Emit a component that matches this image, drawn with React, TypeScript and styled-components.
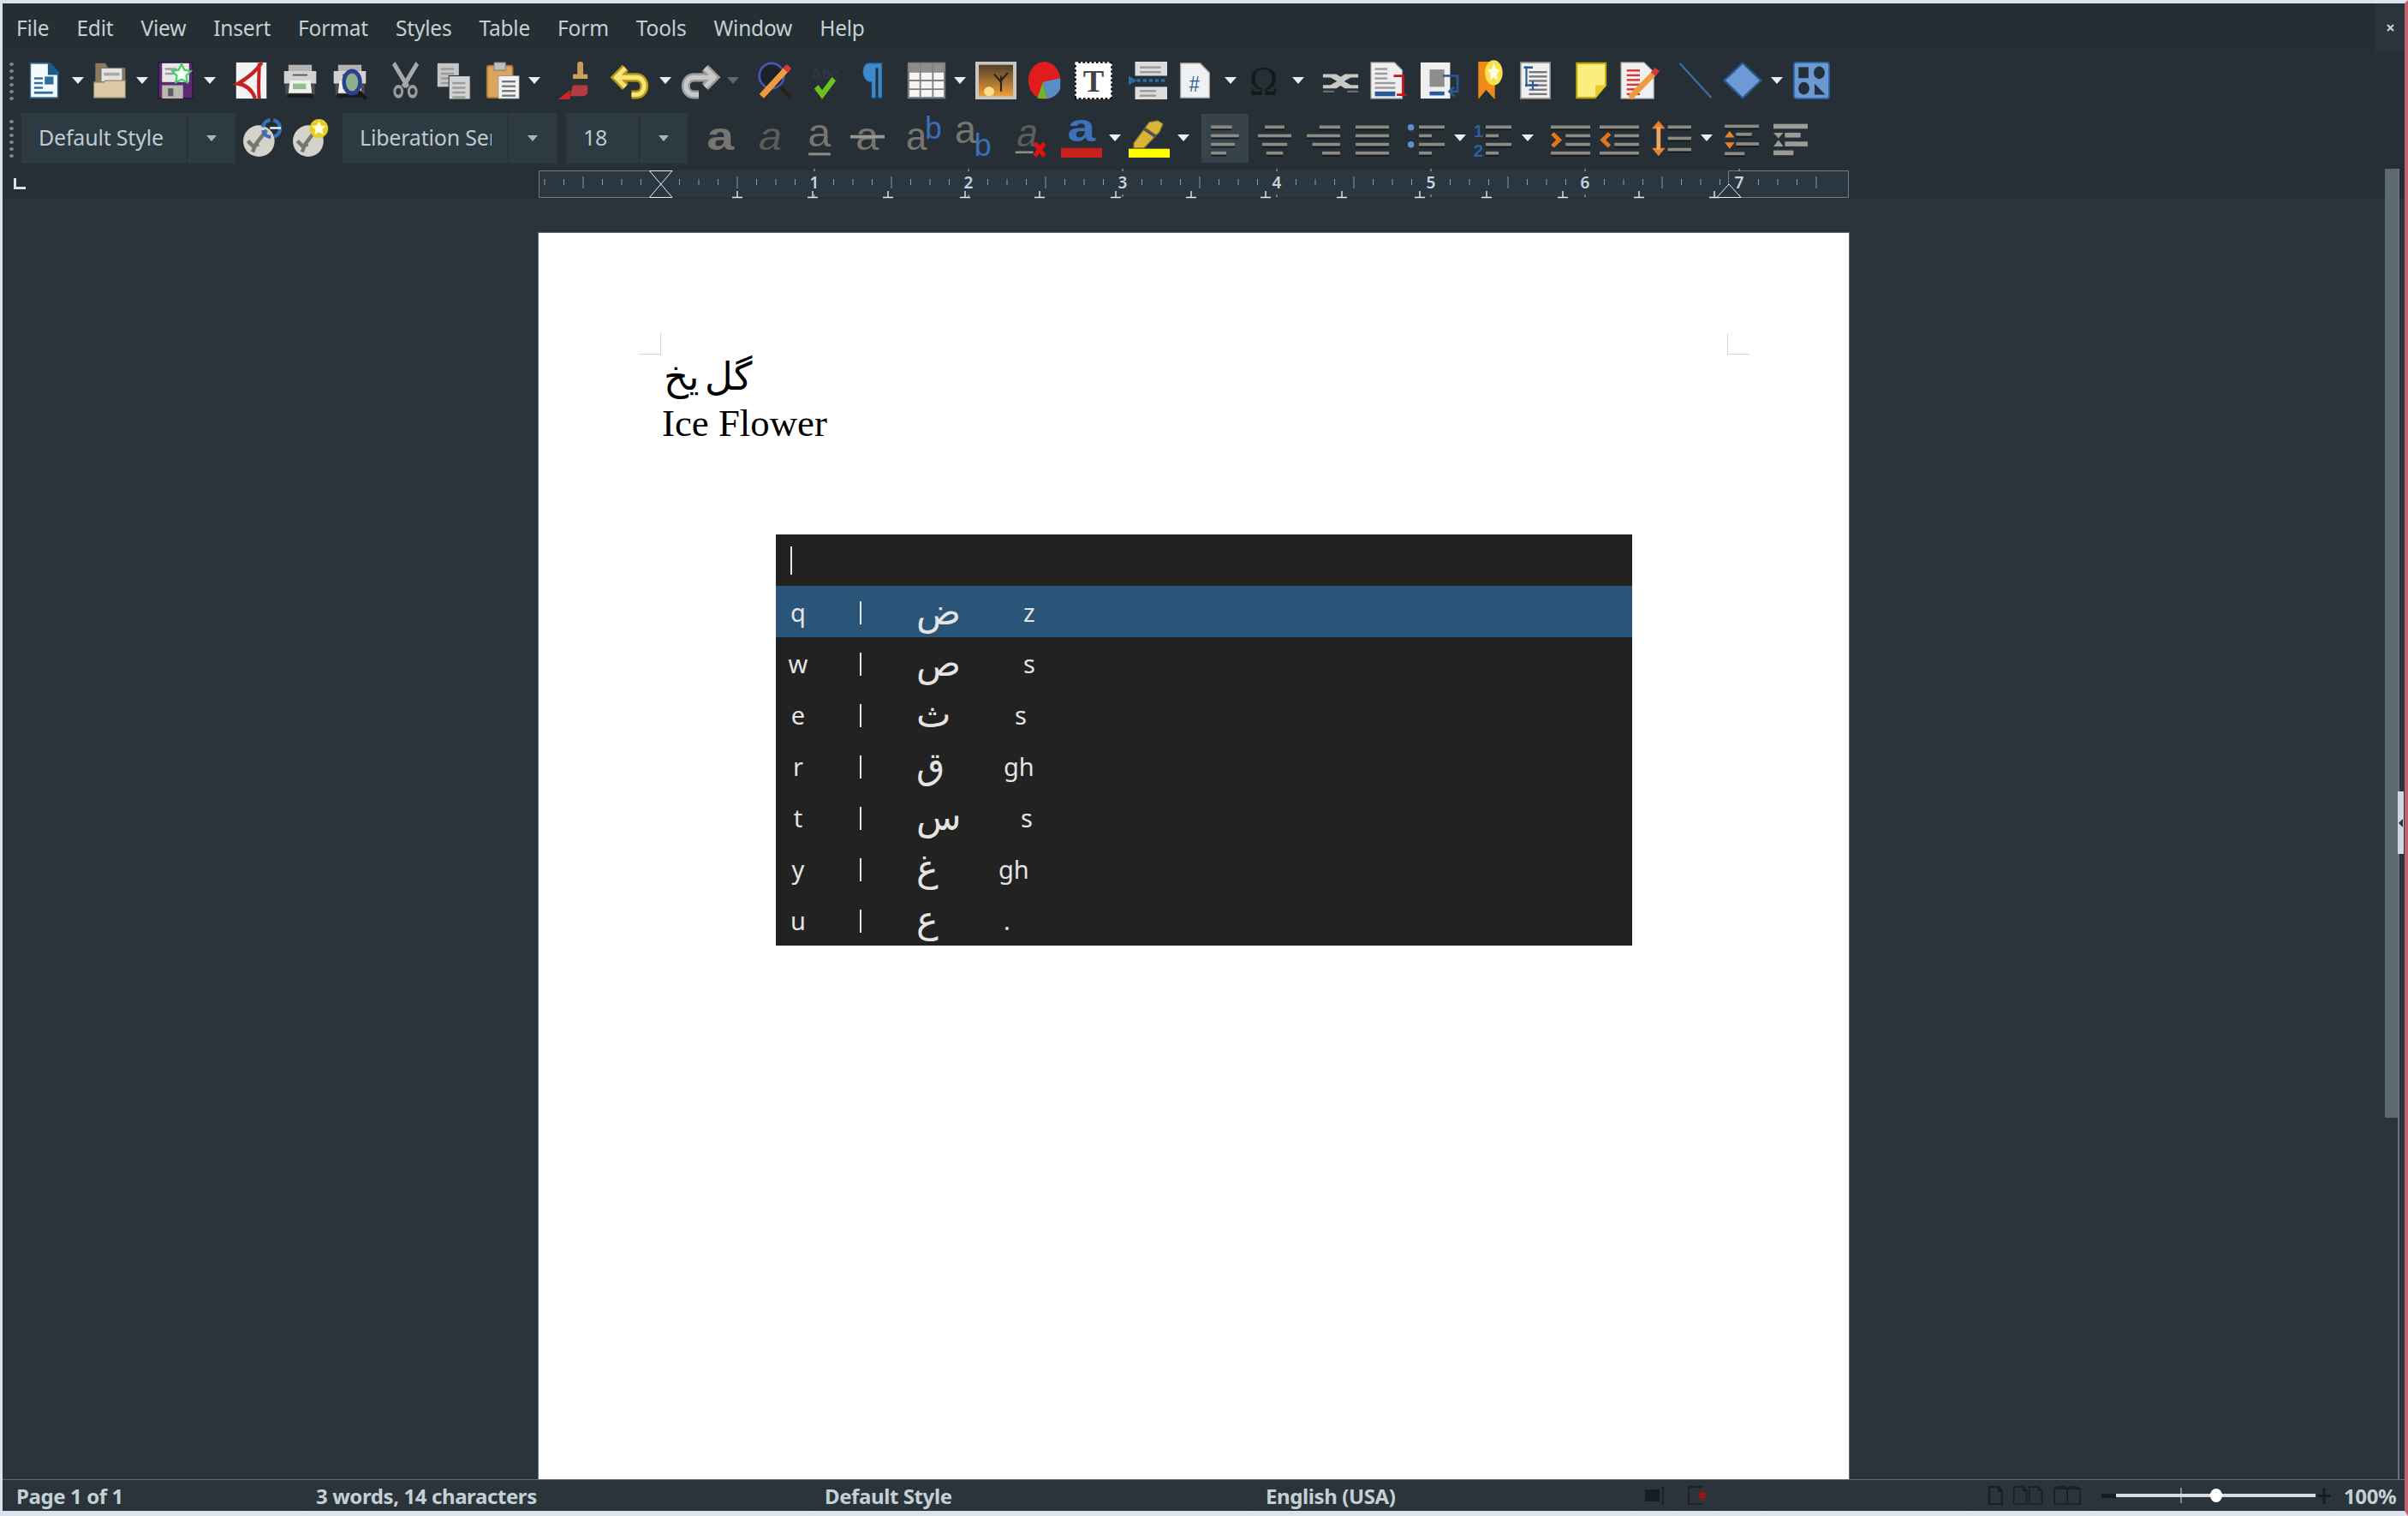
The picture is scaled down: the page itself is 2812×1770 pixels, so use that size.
import React from 'react';
import styled, { createGlobalStyle } from 'styled-components';

const GlobalStyle = createGlobalStyle`
  html, body { margin: 0; padding: 0; background: #dde3ee; }
  #root { width: 2812px; height: 1770px; overflow: hidden; }
`;

const Window = styled.div`
  box-sizing: border-box;
  width: 2812px;
  height: 1770px;
  display: flex;
  flex-direction: column;
  background: #2a343a;
  border-top: 4px solid #dde3ee;
  border-left: 3px solid #dde3ee;
  border-bottom: 6px solid #dde3ee;
  border-right: 4px solid #c4626c;
  font-family: 'Noto Sans', 'Open Sans', sans-serif;
  color: #c3d0d6;
`;

const MenuBar = styled.div`
  display: flex;
  height: 56px;
  flex: none;
`;

const MenuStrip = styled.div`
  flex: 1;
  display: flex;
  align-items: center;
  background: #242e33;
`;

const MenuItem = styled.span`
  padding: 0 16px;
  font-size: 24.5px;
  letter-spacing: -0.2px;
`;

const CloseCell = styled.div`
  width: 34px;
  display: flex;
  align-items: center;
  justify-content: center;
`;

const ToolRow = styled.div<{ $h: number }>`
  display: flex;
  align-items: center;
  height: ${p => p.$h}px;
  flex: none;
  padding-left: 8px;
  background: #262f35;
`;

const Grip = styled.div`
  width: 5px;
  height: 46px;
  flex: none;
  background: radial-gradient(circle at center, #71808a 2px, transparent 2.5px) 0 0 / 5px 8px;
`;

const Tool = styled.div<{ $w: number; $ml: number; $h?: number }>`
  width: ${p => p.$w}px;
  height: ${p => p.$h ?? 44}px;
  margin-left: ${p => p.$ml}px;
  flex: none;
  display: flex;
  align-items: center;
  justify-content: center;
  svg { display: block; overflow: visible; }
`;

const Caret = styled.div<{ $dim?: boolean }>`
  width: 0;
  height: 0;
  border-left: 7px solid transparent;
  border-right: 7px solid transparent;
  border-top: 8px solid ${p => (p.$dim ? '#5a676e' : '#e9eff1')};
`;

const Combo = styled.div`
  width: 100%;
  height: 61px;
  display: flex;
  background: #2e3a42;
  border: 1px solid #253037;
  box-sizing: border-box;
  font-size: 25px;
  color: #bccad1;
`;

const ComboText = styled.div<{ $pl: number }>`
  flex: 1;
  min-width: 0;
  margin-left: ${p => p.$pl}px;
  margin-right: 19px;
  line-height: 56px;
  white-space: nowrap;
  overflow: hidden;
  letter-spacing: -0.2px;
`;

const ComboButton = styled.div`
  width: 56px;
  flex: none;
  border-left: 1px solid #232d33;
  display: flex;
  align-items: center;
  justify-content: center;
`;

const SmallCaret = styled.div`
  width: 0;
  height: 0;
  border-left: 6px solid transparent;
  border-right: 6px solid transparent;
  border-top: 7px solid #aab6bc;
`;

const ActiveBox = styled.div`
  width: 55px;
  height: 57px;
  background: #36434b;
  display: flex;
  align-items: center;
  justify-content: center;
`;

const Body = styled.div`
  position: relative;
  flex: 1;
  min-height: 0;
  display: flex;
  flex-direction: column;
`;

const RulerRow = styled.div`
  height: 38px;
  flex: none;
  display: flex;
  align-items: flex-end;
  background: #262f35;
`;

const TabCorner = styled.div`
  align-self: center;
  width: 11px;
  height: 10px;
  margin-left: 13px;
  margin-right: 599px;
  border-left: 3px solid #dbe2e6;
  border-bottom: 3px solid #dbe2e6;
`;

const Workspace = styled.div`
  flex: 1;
  min-height: 0;
  overflow: hidden;
  padding: 39px 0 0 626px;
  background: #2a343a;
`;

const Page = styled.div`
  position: relative;
  box-sizing: border-box;
  width: 1530px;
  height: 1600px;
  padding: 139px 0 0 144px;
  background: #fff;
  box-shadow: 0 0 0 1px #5f6b70;
`;

const MarginCorner = styled.div<{ $right?: boolean }>`
  position: absolute;
  top: 117px;
  ${p => (p.$right ? 'left: 1388px;' : 'left: 117px;')}
  width: 25px;
  height: 24px;
  border-bottom: 1px solid #d4d4d4;
  ${p => (p.$right ? 'border-left: 1px solid #d4d4d4;' : 'border-right: 1px solid #d4d4d4;')}
`;

const DocLine = styled.div<{ $arabic?: boolean }>`
  color: #000;
  font-family: ${p => (p.$arabic ? "'DejaVu Sans', sans-serif" : "'Liberation Serif', serif")};
  font-size: ${p => (p.$arabic ? 45 : 44.8)}px;
  line-height: ${p => (p.$arabic ? 58 : 50)}px;
  word-spacing: ${p => (p.$arabic ? -8 : 0)}px;
  padding-left: ${p => (p.$arabic ? 2 : 0)}px;
`;

const KeyDialog = styled.div`
  position: absolute;
  left: 277px;
  top: 352px;
  width: 1000px;
  height: 480px;
  background: #222222;
  color: #e4e4e4;
`;

const InputRow = styled.div`
  height: 60px;
  display: flex;
  align-items: center;
  padding-left: 17px;
`;

const InputCursor = styled.div`
  width: 2px;
  height: 33px;
  background: #e8e8e8;
`;

const KeyRow = styled.div<{ $selected?: boolean }>`
  height: 60px;
  display: flex;
  align-items: center;
  background: ${p => (p.$selected ? '#2a5578' : 'transparent')};
  font-family: 'Noto Sans', 'DejaVu Sans', sans-serif;
  font-size: 29px;
`;

const KeyName = styled.span`
  width: 52px;
  margin-right: 46px;
  flex: none;
  text-align: center;
`;

const KeyBar = styled.span`
  width: 66px;
  flex: none;
  display: flex;
  padding-top: 2px;
`;

const BarMark = styled.span`
  width: 2px;
  height: 27px;
  background: #e4e4e4;
`;

const KeyArabic = styled.span`
  flex: none;
  width: 102px;
  font-family: 'DejaVu Sans', sans-serif;
  font-size: 43px;
  line-height: 56px;
  direction: rtl;
  text-align: left;
`;

const KeyLatin = styled.span<{ $ml: number }>`
  margin-left: ${p => p.$ml}px;
`;

const ScrollTrack = styled.div`
  position: absolute;
  top: 2px;
  bottom: 0;
  right: 0;
  width: 23px;
  background: linear-gradient(90deg, transparent 15px, #66737a 15px, #66737a 17px, transparent 17px);
`;

const ScrollThumb = styled.div`
  height: 1108px;
  width: 15px;
  background: #5c6a70;
`;

const ResizeHandle = styled.div`
  position: absolute;
  top: 727px;
  left: 15px;
  width: 7px;
  height: 73px;
  background: #cfd8de;
  display: flex;
  align-items: center;
  &::after {
    content: '';
    border-top: 5px solid transparent;
    border-bottom: 5px solid transparent;
    border-right: 5px solid #29343a;
    margin-left: 1px;
  }
`;

const StatusBar = styled.div`
  height: 37px;
  flex: none;
  display: flex;
  border-top: 1px solid #5f6b70;
  box-sizing: border-box;
  background: #2a343a;
  font-size: 24px;
  font-weight: 700;
  letter-spacing: -0.4px;
  color: #c3d0d6;
`;

const StatusCell = styled.div<{ $w: number; $pl?: number; $center?: boolean }>`
  width: ${p => p.$w}px;
  flex: none;
  box-sizing: border-box;
  padding-left: ${p => p.$pl ?? 0}px;
  display: flex;
  align-items: center;
  justify-content: ${p => (p.$center ? 'center' : 'flex-start')};
  border-right: 1px solid #263036;
  white-space: nowrap;
  &:last-child { border-right: none; }
`;

type IconProps = { children: React.ReactNode; w?: number; h?: number };
const Svg = ({ children, w, h }: IconProps) => (
  <svg
    viewBox="0 0 24 24"
    width={w ?? '100%'}
    height={h ?? '100%'}
    preserveAspectRatio="none"
  >
    {children}
  </svg>
);

const star = (cx: number, cy: number, r: number) => {
  const pts: string[] = [];
  for (let i = 0; i < 10; i++) {
    const a = (Math.PI / 5) * i - Math.PI / 2;
    const d = i % 2 ? r * 0.5 : r;
    pts.push(`${(cx + d * Math.cos(a)).toFixed(2)},${(cy + d * Math.sin(a)).toFixed(2)}`);
  }
  return pts.join(' ');
};

const PageLines = ({ x, y, w, n, gap = 3, color = '#9a9a9a' }: { x: number; y: number; w: number; n: number; gap?: number; color?: string }) => (
  <>
    {Array.from({ length: n }, (_, i) => (
      <rect key={i} x={x} y={y + i * gap} width={w} height={1.3} fill={color} />
    ))}
  </>
);

const NewDoc = () => (
  <Svg>
    <path d="M1 1h15l7 6v16H1z" fill="#f7fafc" stroke="#2f6c99" strokeWidth="1" />
    <path d="M15 0.5h2l7 6v2h-9z" fill="#1d5b88" />
    <PageLines x={4} y={10} w={7} n={3} gap={3} color="#2c6ea3" />
    <rect x="12.5" y="9.5" width="7" height="5" fill="#2c6ea3" />
    <rect x="4" y="19" width="15" height="1.5" fill="#2c6ea3" />
  </Svg>
);

const Folder = () => (
  <Svg>
    <path d="M2 1h7l2 3h12v12H2z" fill="#8c7a5f" />
    <rect x="6" y="4" width="15" height="9" fill="#e4e4e0" stroke="#6b6b6b" strokeWidth=".6" />
    <rect x="8" y="7" width="11" height="2" fill="#aaa" />
    <path d="M1 13h7l1 -1h14v11H1z" fill="#dcc8a6" stroke="#8c7a5f" strokeWidth=".6" />
  </Svg>
);

const SaveAs = () => (
  <Svg>
    <rect x="0.5" y="0.5" width="23" height="23" fill="#5b2a73" stroke="#2e1a3a" />
    <rect x="3" y="1" width="18" height="12" fill="#e8e8e8" />
    <PageLines x={5} y={4} w={8} n={2} gap={3} />
    <polygon points={star(16, 8, 6.5)} fill="#f2fff2" stroke="#3fd06a" strokeWidth="1.2" />
    <rect x="3" y="15" width="14" height="8.5" fill="#b9b9b0" />
    <rect x="7" y="17" width="3.5" height="5" fill="#5f5a63" />
  </Svg>
);

const Pdf = () => (
  <Svg>
    <rect x="0.5" y="0.5" width="23" height="23" fill="#f4f4f4" />
    <path d="M20 0.5C15 7 8 11 2 14C9 15 13 19 15 23.5M18 1C18 8 17 16 18 23.5" fill="none" stroke="#c52323" strokeWidth="2.6" />
  </Svg>
);

const Printer = () => (
  <>
    <rect x="4" y="2" width="16" height="6" fill="#b3b3b3" />
    <rect x="1" y="6" width="22" height="8" fill="#d2d2d2" />
    <rect x="7" y="8" width="10" height="1" fill="#555" />
    <rect x="2" y="14" width="20" height="7" fill="#4d4d4d" />
    <path d="M5 12h14l1 8H4z" fill="#f0f0f0" />
    <rect x="7" y="14" width="9" height="3.5" fill="#8fbf8a" />
    <rect x="3" y="20.5" width="18" height="2.5" fill="#1c1c1c" />
  </>
);

const Print = () => <Svg><Printer /></Svg>;

const Preview = () => (
  <Svg>
    <Printer />
    <ellipse cx="13.5" cy="13" rx="5.5" ry="7" fill="#8fae8a" stroke="#2c3f8f" strokeWidth="2.6" />
    <path d="M18 19l5 4.5" stroke="#151515" strokeWidth="2.4" />
  </Svg>
);

const Cut = () => (
  <Svg>
    <path d="M2 1l12 15M22 1L10 16" stroke="#a8a8a8" strokeWidth="3.4" fill="none" />
    <circle cx="6" cy="19" r="3.2" fill="none" stroke="#9a9a9a" strokeWidth="2.2" />
    <circle cx="18" cy="19" r="3.2" fill="none" stroke="#9a9a9a" strokeWidth="2.2" />
  </Svg>
);

const Copy = () => (
  <Svg>
    <rect x="0.5" y="1" width="15" height="15" fill="#c6c6c6" />
    <PageLines x={3} y={4} w={9} n={4} />
    <rect x="8.5" y="9" width="15" height="15" fill="#d2d2d2" stroke="#2a343a" strokeWidth=".6" />
    <PageLines x={11} y={13} w={9} n={4} />
  </Svg>
);

const Paste = () => (
  <Svg>
    <rect x="1" y="2.5" width="18" height="20.5" rx="1.5" fill="#dca55f" stroke="#a9752f" />
    <rect x="6" y="0.5" width="8" height="5" fill="#bdbdbd" stroke="#777" strokeWidth=".5" />
    <rect x="9" y="9" width="14.5" height="14.5" fill="#f2f2f2" stroke="#888" strokeWidth=".4" />
    <PageLines x={11.5} y={12} w={9.5} n={4} color="#777" />
  </Svg>
);

const Brush = () => (
  <Svg>
    <rect x="13" y="0" width="4" height="9" rx="1.5" fill="#c99a5c" />
    <rect x="10" y="8" width="10" height="3" fill="#c9a55c" />
    <rect x="10" y="11" width="10" height="4" fill="#2e2e2e" />
    <path d="M10 15h10v5l-2 2H8z" fill="#b33a3f" />
    <path d="M0 24L8 18v6z" fill="#d12427" />
  </Svg>
);

const UndoArrow = ({ a, b }: { a: string; b: string }) => (
  <>
    <path d="M8 4L2 10l6 6M3 10h12c7 0 7 11 0 11h-3" fill="none" stroke={a} strokeWidth="5.5" />
    <path d="M8 4L2 10l6 6M3 10h12c7 0 7 11 0 11h-3" fill="none" stroke={b} strokeWidth="2.8" />
  </>
);

const Undo = () => <Svg><UndoArrow a="#b99a12" b="#f5e37c" /></Svg>;
const Redo = () => (
  <Svg>
    <g transform="translate(24 0) scale(-1 1)"><UndoArrow a="#9a9a9a" b="#c8c8c8" /></g>
  </Svg>
);

const Spell = () => (
  <Svg>
    <ellipse cx="9.5" cy="9" rx="8" ry="8" fill="#1d2229" stroke="#4358b5" strokeWidth="1.5" />
    <path d="M15 16l7 7" stroke="#2b2118" strokeWidth="2.6" />
    <path d="M3 22L20 4" stroke="#ef9a3c" strokeWidth="4" />
    <path d="M18.5 5.5L21 3" stroke="#d83a3a" strokeWidth="4" />
  </Svg>
);

const AutoSpell = () => (
  <Svg>
    <text x="12" y="11" textAnchor="middle" fontFamily="'Liberation Sans'" fontSize="10" fontWeight="700" fill="#2f383e">Abc</text>
    <path d="M6 16l4 5L18 11" fill="none" stroke="#6cc11f" strokeWidth="3.6" />
  </Svg>
);

const Pilcrow = () => (
  <Svg>
    <path d="M9 1h14v22h-4V4h-3v19h-4V13C0 13 0 1 9 1z" fill="#3d8acb" stroke="#1f5f99" strokeWidth=".6" />
  </Svg>
);

const TableIcon = () => (
  <Svg>
    <rect x="0.5" y="1" width="23" height="22" fill="#f5f5f5" stroke="#7f7f7f" strokeWidth="1.2" />
    <rect x="1" y="1.5" width="22" height="5.5" fill="#8d8d8d" />
    <path d="M8 1v22M16 1v22M1 12h22M1 17.5h22" stroke="#7f7f7f" strokeWidth="1" />
  </Svg>
);

const ImageIcon = () => (
  <Svg>
    <defs>
      <linearGradient id="sunset" x1="0" y1="0" x2="0" y2="1">
        <stop offset="0" stopColor="#4a3a2a" />
        <stop offset="1" stopColor="#f5a43c" />
      </linearGradient>
    </defs>
    <rect x="1" y="1" width="22" height="22" fill="url(#sunset)" stroke="#c8c8c0" strokeWidth="2" />
    <circle cx="8" cy="19" r="3" fill="#ffe08a" />
    <path d="M15 19V9M15 13l-4-5M15 12l4-5" stroke="#2d2116" strokeWidth="1.1" fill="none" />
  </Svg>
);

const Chart = () => (
  <Svg>
    <ellipse cx="12" cy="12" rx="11.5" ry="12" fill="#e11c1c" />
    <path d="M11 13L23.5 10.5V17C22 21 18 23 14 23.5z" fill="#5a8cc8" />
    <path d="M11 13L14 23.5H7z" fill="#6cb42c" />
  </Svg>
);

const TextBox = () => (
  <Svg>
    <rect x="0" y="0" width="24" height="24" fill="#000" />
    <rect x="1" y="1" width="22" height="22" fill="#fff" stroke="#fff" strokeWidth="1.6" strokeDasharray="1.4 1.4" />
    <text x="12" y="19" textAnchor="middle" fontFamily="'Liberation Serif'" fontWeight="700" fontSize="20" fill="#444">T</text>
  </Svg>
);

const PageBreak = () => (
  <Svg>
    <rect x="4" y="0" width="20" height="9" fill="#dcdcdc" />
    <PageLines x={7} y={3} w={13} n={2} />
    <rect x="4" y="16" width="20" height="8" fill="#dcdcdc" />
    <PageLines x={7} y={18} w={10} n={2} />
    <path d="M0 9v6l5-3z" fill="#2f6aa6" />
    <path d="M5 12h19" stroke="#2f6aa6" strokeWidth="2" strokeDasharray="2.4 1.4" />
  </Svg>
);

const FieldIcon = () => (
  <Svg>
    <path d="M1 1h15l7 6v16H1z" fill="#eef0f2" stroke="#999" strokeWidth=".8" />
    <text x="11.5" y="19" textAnchor="middle" fontFamily="'Liberation Sans'" fontSize="14" fill="#2a5a96">#</text>
  </Svg>
);

const Omega = () => (
  <Svg>
    <text x="12" y="21" textAnchor="middle" fontFamily="'Liberation Serif'" fontSize="26" fill="#14191c">Ω</text>
  </Svg>
);

const CrossRef = () => (
  <Svg>
    <path d="M1 9h8l3 2 3-2h8M1 16h8l3-2 3 2h8M6 9l12 7M18 9L6 16" fill="none" stroke="#c9c9c4" strokeWidth="2.2" />
    <path d="M1 19h7M16 19h7" stroke="#6c6c66" strokeWidth="1.2" />
  </Svg>
);

const Footnote = () => (
  <Svg>
    <path d="M0.5 0.5h15l5 5v18H0.5z" fill="#efefef" stroke="#999" strokeWidth=".6" />
    <PageLines x={3} y={4} w={8} n={3} gap={3} />
    <PageLines x={3} y={13} w={13} n={2} gap={3} />
    <rect x="3" y="19" width="13" height="3" fill="#2a5a96" />
    <path d="M15 9h6v13M17 21h6" fill="none" stroke="#c8141c" strokeWidth="1.5" />
  </Svg>
);

const Endnote = () => (
  <Svg>
    <rect x="0.5" y="0.5" width="18" height="23" fill="#efefef" />
    <rect x="6" y="5" width="9" height="11" fill="#8d8d8d" />
    <rect x="6" y="19" width="9" height="2.5" fill="#2a5a96" />
    <path d="M14 9h9v10h-4M21 22l-3-3 3-3" fill="none" stroke="#2a5a96" strokeWidth="1.4" />
  </Svg>
);

const Bookmark = () => (
  <Svg>
    <path d="M1 0h15v24l-8-6-7 6z" fill="#f08a18" />
    <circle cx="15" cy="7" r="8" fill="#f7e24d" />
    <polygon points={star(15, 7, 6)} fill="#fdfbe8" />
  </Svg>
);

const IndexIcon = () => (
  <Svg>
    <rect x="0.5" y="0.5" width="23" height="23" fill="#f0f0f0" stroke="#888" />
    <rect x="3" y="3" width="7" height="1.4" fill="#2a5a96" />
    <PageLines x={7} y={6} w={14} n={6} gap={2.8} color="#777" />
    <path d="M5 3v13M4 15h10M10 12v6" stroke="#2a5a96" strokeWidth="1.4" />
  </Svg>
);

const NoteIcon = () => (
  <Svg>
    <path d="M0.8 1h22v14l-8 8H0.8z" fill="#fbee7e" stroke="#c3a80c" strokeWidth="1.3" />
    <path d="M15 23v-8h8z" fill="#e2cb35" />
  </Svg>
);

const TrackIcon = () => (
  <Svg>
    <path d="M0.5 0.5h14l6 6v17H0.5z" fill="#f0f0f0" stroke="#999" strokeWidth=".6" />
    <PageLines x={4} y={5} w={8} n={6} gap={3} color="#d93434" />
    <path d="M6 23L21 7" stroke="#ef9a3c" strokeWidth="3.6" />
    <path d="M20 8l2.6-3" stroke="#d83a3a" strokeWidth="3.6" />
  </Svg>
);

const LineIcon = () => (
  <Svg>
    <path d="M1 1l22 22" stroke="#3a6da6" strokeWidth="1.3" />
  </Svg>
);

const Diamond = () => (
  <Svg>
    <path d="M12 0.8L23.2 12 12 23.2 0.8 12z" fill="#6d9ad6" stroke="#2c5a8f" strokeWidth="1.2" />
  </Svg>
);

const Shapes = () => (
  <Svg>
    <rect x="0.5" y="0.5" width="23" height="23" rx="1.5" fill="#6c98d2" stroke="#2b5f9e" />
    <rect x="3.5" y="3.5" width="6.5" height="7" fill="#22303c" />
    <ellipse cx="17" cy="7" rx="3.6" ry="4" fill="#22303c" />
    <ellipse cx="7" cy="17" rx="3.6" ry="4" fill="#22303c" />
    <path d="M14 14v7h7z" fill="#22303c" />
  </Svg>
);

const StyleBall = ({ badge }: { badge: React.ReactNode }) => (
  <Svg>
    <ellipse cx="10" cy="14" rx="10" ry="10" fill="#d3d3cc" />
    <path d="M15 7L8 16l-2 5M3 14l3 3 4-1" fill="none" stroke="#77776f" strokeWidth="2.4" />
    {badge}
  </Svg>
);

const StyleUpdate = () => (
  <StyleBall
    badge={
      <>
        <circle cx="18" cy="6" r="5.5" fill="none" stroke="#3a6fb5" strokeWidth="2.4" strokeDasharray="7 2" />
        <rect x="17" y="5" width="7" height="1.4" fill="#e6eef7" />
      </>
    }
  />
);

const StyleNew = () => (
  <StyleBall
    badge={
      <>
        <circle cx="17" cy="6" r="6" fill="#e7cf1e" />
        <polygon points={star(17, 6, 4.8)} fill="#fffbe0" />
      </>
    }
  />
);

// the svg is taller than wide on screen, so sx widens the letter back
const Letter = ({
  c = 'a',
  x = 12,
  y = 18,
  size = 16,
  sx = 1.4,
  fill = '#76756f',
  bold,
  italic,
}: {
  c?: string;
  x?: number;
  y?: number;
  size?: number;
  sx?: number;
  fill?: string;
  bold?: boolean;
  italic?: boolean;
}) => (
  <text
    transform={`translate(${x} ${y}) scale(${sx} 1)`}
    textAnchor="middle"
    fontFamily="'Liberation Mono', monospace"
    fontSize={size}
    fontWeight={bold ? 700 : 400}
    fontStyle={italic ? 'italic' : 'normal'}
    fill={fill}
  >
    {c}
  </text>
);

const Bold = () => <Svg><Letter bold size={25} sx={1.7} y={19} /></Svg>;
const Italic = () => <Svg><Letter italic size={25} sx={1.7} y={19} fill="#5c5c58" /></Svg>;
const Underline = () => (
  <Svg>
    <Letter size={25} sx={1.7} y={17} />
    <rect x="1" y="21" width="22" height="1.6" fill="#8d8d86" />
  </Svg>
);
const Strike = () => (
  <Svg>
    <Letter size={25} sx={1.2} y={19} />
    <rect x="0" y="10" width="24" height="2" fill="#9a9a90" />
  </Svg>
);
const Super = () => (
  <Svg>
    <Letter size={25} sx={1} x={8} y={19} />
    <Letter c="b" size={20} sx={1} x={19} y={12} fill="#3a6fb5" />
  </Svg>
);
const Sub = () => (
  <Svg>
    <Letter size={25} sx={1} x={8} y={15} />
    <Letter c="b" size={20} sx={1} x={19} y={23} fill="#3a6fb5" />
  </Svg>
);
const ClearFormat = () => (
  <Svg>
    <Letter italic size={25} sx={1.1} x={10} y={17} fill="#5c5c58" />
    <rect x="1" y="20" width="13" height="1.4" fill="#8d8d86" />
    <path d="M15 15l7 8M22 15l-7 8" stroke="#e21010" strokeWidth="3" />
  </Svg>
);
const FontColor = () => (
  <Svg>
    <Letter bold size={25} sx={1.2} y={14} fill="#3b72b8" />
    <rect x="0" y="18" width="24" height="6" fill="#c8201c" />
  </Svg>
);
const Highlight = () => (
  <Svg>
    <path d="M3 15L12 2l5-1 3 2-2 5-9 10H3z" fill="#d9b533" stroke="#8a7a3a" strokeWidth=".6" />
    <path d="M9 6l7 5" stroke="#555" strokeWidth="2" />
    <rect x="0" y="18.5" width="24" height="5.5" fill="#ffff00" />
  </Svg>
);

const Bar = ({ x, y, w, fill = '#8b8b84' }: { x: number; y: number; w: number; fill?: string }) => (
  <>
    <rect x={x} y={y + 1.6} width={w} height={1.4} fill="#14191c" />
    <rect x={x} y={y} width={w} height={2} fill={fill} />
  </>
);

const Align = ({ rows }: { rows: [number, number][] }) => (
  <Svg>
    {rows.map(([x, w], i) => (
      <Bar key={i} x={x} y={4 + i * 5.4} w={w} />
    ))}
  </Svg>
);

const Bullets = () => (
  <Svg>
    <circle cx="3" cy="5.2" r="2" fill="#5d8fce" />
    <circle cx="3" cy="15.8" r="2" fill="#5d8fce" />
    <Bar x={8} y={4} w={16} />
    <Bar x={8} y={9.4} w={8} />
    <Bar x={8} y={14.8} w={16} />
    <Bar x={8} y={20.2} w={8} />
  </Svg>
);

const Numbers = () => (
  <Svg>
    <text x="3.5" y="11" textAnchor="middle" fontFamily="'Liberation Sans'" fontWeight="700" fontSize="11" fill="#2e5e9e">1</text>
    <text x="3.5" y="23.5" textAnchor="middle" fontFamily="'Liberation Sans'" fontWeight="700" fontSize="11" fill="#2e5e9e">2</text>
    <Bar x={8} y={4} w={16} />
    <Bar x={8} y={9.4} w={8} />
    <Bar x={8} y={14.8} w={16} />
    <Bar x={8} y={20.2} w={8} />
  </Svg>
);

const IndentMore = () => (
  <Svg>
    <Bar x={0} y={4} w={24} />
    <Bar x={9} y={9.4} w={15} />
    <Bar x={9} y={14.8} w={15} />
    <Bar x={0} y={20.2} w={24} />
    <path d="M1 9l4 4-4 4" fill="none" stroke="#e2761e" strokeWidth="2.6" />
  </Svg>
);

const IndentLess = () => (
  <Svg>
    <Bar x={0} y={4} w={24} />
    <Bar x={9} y={9.4} w={15} />
    <Bar x={9} y={14.8} w={15} />
    <Bar x={0} y={20.2} w={24} />
    <path d="M6 9l-4 4 4 4" fill="none" stroke="#e2761e" strokeWidth="2.6" />
  </Svg>
);

const LineSpacing = () => (
  <Svg>
    <path d="M4.5 1l4 5h-8zM4.5 23l4-5h-8z" fill="#e8812a" />
    <rect x="3.3" y="5" width="2.4" height="14" fill="#f0a860" />
    <Bar x={10} y={4} w={14} />
    <Bar x={10} y={11} w={14} />
    <Bar x={10} y={18} w={14} />
  </Svg>
);

const ParaSpacing = () => (
  <Svg>
    <Bar x={0} y={3.5} w={24} />
    <Bar x={8} y={8.5} w={11} />
    <Bar x={8} y={14.5} w={16} />
    <Bar x={0} y={20.5} w={14} />
    <path d="M3.5 7.5l3.5 4H0zM3.5 18.5L7 14.5H0z" fill="#e8812a" />
  </Svg>
);

const ParaSpacingLess = () => (
  <Svg>
    <rect x="0" y="3" width="24" height="3" fill="#9c9c96" />
    <rect x="8" y="8.5" width="11" height="3" fill="#9c9c96" />
    <rect x="8" y="14" width="16" height="3" fill="#9c9c96" />
    <rect x="0" y="19.5" width="14" height="3" fill="#9c9c96" />
    <path d="M3.5 12L0 8.5h7zM3.5 13L0 17h7z" fill="#9c9c96" />
  </Svg>
);

type Item = { x: number; w: number; h?: number; node: React.ReactNode };

const tool = (x1: number, x2: number, node: React.ReactNode, h?: number): Item => ({ x: x1, w: x2 - x1, node, h });
const caret = (cx: number, dim?: boolean): Item => ({ x: cx - 7, w: 14, node: <Caret $dim={dim} /> });

const standardBar: Item[] = [
  tool(34, 69, <NewDoc />), caret(91),
  tool(108, 148, <Folder />), caret(166),
  tool(184, 226, <SaveAs />), caret(245),
  tool(275, 312, <Pdf />),
  tool(330, 371, <Print />),
  tool(388, 429, <Preview />),
  tool(457, 490, <Cut />),
  tool(510, 550, <Copy />),
  tool(567, 607, <Paste />), caret(624),
  tool(652, 693, <Brush />),
  tool(716, 759, <Undo />), caret(777),
  tool(794, 838, <Redo />), caret(856, true),
  tool(884, 927, <Spell />),
  tool(943, 984, <AutoSpell />),
  tool(1005, 1031, <Pilcrow />),
  tool(1060, 1104, <TableIcon />), caret(1121),
  tool(1139, 1187, <ImageIcon />),
  tool(1200, 1239, <Chart />),
  tool(1255, 1299, <TextBox />),
  tool(1318, 1363, <PageBreak />),
  tool(1377, 1414, <FieldIcon />), caret(1437),
  tool(1455, 1496, <Omega />), caret(1516),
  tool(1543, 1588, <CrossRef />),
  tool(1600, 1644, <Footnote />),
  tool(1658, 1704, <Endnote />),
  tool(1725, 1756, <Bookmark />),
  tool(1775, 1811, <IndexIcon />),
  tool(1840, 1877, <NoteIcon />),
  tool(1892, 1938, <TrackIcon />),
  tool(1960, 2000, <LineIcon />),
  tool(2012, 2058, <Diamond />), caret(2075),
  tool(2094, 2137, <Shapes />),
];

const ComboBox = ({ text, pl }: { text: string; pl: number }) => (
  <Combo>
    <ComboText $pl={pl}>{text}</ComboText>
    <ComboButton><SmallCaret /></ComboButton>
  </Combo>
);

const formatBar: Item[] = [
  tool(24, 276, <ComboBox text="Default Style" pl={20} />, 61),
  tool(284, 328, <StyleUpdate />),
  tool(342, 385, <StyleNew />),
  tool(399, 651, <ComboBox text="Liberation Serif" pl={20} />, 61),
  tool(660, 804, <ComboBox text="18" pl={20} />, 61),
  tool(825, 858, <Bold />, 45),
  tool(886, 914, <Italic />, 45),
  tool(943, 971, <Underline />, 45),
  tool(993, 1033, <Strike />, 45),
  tool(1056, 1099, <Super />, 45),
  tool(1113, 1157, <Sub />, 45),
  tool(1184, 1223, <ClearFormat />, 45),
  tool(1239, 1287, <FontColor />, 45), caret(1302),
  tool(1318, 1366, <Highlight />, 45), caret(1382),
  tool(1403, 1458, (
    <ActiveBox>
      <Svg w={39} h={45}>
        {([[0, 15], [0, 20], [0, 17], [0, 11]] as const).map(([x, w], i) => (
          <Bar key={i} x={x + 2} y={4 + i * 5.4} w={w} />
        ))}
      </Svg>
    </ActiveBox>
  ), 57),
  tool(1469, 1508, <Align rows={[[5, 14], [0, 24], [3, 18], [6, 12]]} />, 45),
  tool(1526, 1565, <Align rows={[[9, 15], [0, 24], [4, 20], [11, 13]]} />, 45),
  tool(1583, 1622, <Align rows={[[0, 24], [0, 24], [0, 24], [0, 24]]} />, 45),
  tool(1642, 1687, <Bullets />, 45), caret(1705),
  tool(1720, 1765, <Numbers />, 45), caret(1784),
  tool(1811, 1857, <IndentMore />, 45),
  tool(1868, 1914, <IndentLess />, 45),
  tool(1928, 1975, <LineSpacing />, 45), caret(1993),
  tool(2014, 2054, <ParaSpacing />, 45),
  tool(2071, 2111, <ParaSpacingLess />, 45),
];

const Tools = ({ items }: { items: Item[] }) => (
  <>
    {items.map((item, i) => {
      const prevEnd = i === 0 ? 16 : items[i - 1].x + items[i - 1].w;
      return (
        <Tool key={item.x} $w={item.w} $h={item.h} $ml={item.x - prevEnd}>
          {item.node}
        </Tool>
      );
    })}
  </>
);

// ruler drawn 1:1 from x=629, one inch is 180px, zero sits at x=771
const Ruler = () => {
  const zero = 142;
  const ticks: React.ReactNode[] = [];
  for (let i = -6; i <= 60; i++) {
    const x = zero + i * 22.5;
    if (i % 8 === 0) {
      if (i === 0) continue;
      ticks.push(<rect key={`n${i}`} x={x - 0.5} y={0} width={1} height={3} fill="#a8b6bd" />);
      ticks.push(<rect key={`b${i}`} x={x - 0.5} y={30} width={1} height={3} fill="#a8b6bd" />);
      ticks.push(
        <text key={`t${i}`} x={x} y={23} textAnchor="middle" fontFamily="'Noto Sans'" fontSize="19" fontWeight="600" fill="#c7d4de">
          {i / 8}
        </text>,
      );
    } else if (i % 4 === 0) {
      ticks.push(<rect key={i} x={x - 0.5} y={9} width={1} height={14} fill="#8d9aa1" />);
    } else {
      ticks.push(<rect key={i} x={x - 0.5} y={12} width={1} height={7} fill="#8d9aa1" />);
    }
  }
  const tabs = [232, 320, 408, 498, 585, 674, 762, 849, 938, 1029, 1107, 1196, 1285, 1373];
  return (
    <svg width={1530} height={36} viewBox="0 0 1530 36">
      <rect x="0" y="2" width="1530" height="32" fill="#2a3640" />
      <path d="M0.5 2.5H129M0.5 33.5H129M0.5 2.5V33.5" fill="none" stroke="#6f7c83" strokeWidth="1" />
      <path d="M1389.5 2.5H1529.5V33.5H1389.5Z" fill="none" stroke="#6f7c83" />
      {ticks}
      {tabs.map(x => (
        <path key={x} d="M0 33.5H12M6 26V33" transform={`translate(${x - 6} 0)`} stroke="#e4ebef" strokeWidth="1.4" fill="none" />
      ))}
      <path d="M129.5 2.5H156L129.5 33.5H156Z" fill="#2a3640" stroke="#e8eef1" strokeWidth="1" />
      <path d="M1376 33.5H1404L1390 18Z" fill="#2a3640" stroke="#e8eef1" strokeWidth="1" />
    </svg>
  );
};

const menus = ['File', 'Edit', 'View', 'Insert', 'Format', 'Styles', 'Table', 'Form', 'Tools', 'Window', 'Help'];

const keys: { key: string; arabic: string; latin: string; ml: number }[] = [
  { key: 'q', arabic: 'ض', latin: 'z', ml: 23 },
  { key: 'w', arabic: 'ص', latin: 's', ml: 23 },
  { key: 'e', arabic: 'ث', latin: 's', ml: 13 },
  { key: 'r', arabic: 'ق', latin: 'gh', ml: 0 },
  { key: 't', arabic: 'س', latin: 's', ml: 20 },
  { key: 'y', arabic: 'غ', latin: 'gh', ml: -6 },
  { key: 'u', arabic: 'ع', latin: '.', ml: 0 },
];

const InsertMode = () => (
  <svg width={22} height={20} viewBox="0 0 22 20">
    <rect x="0" y="3" width="17" height="14" fill="#171e22" />
    <path d="M21 0v20M19 0.5h4M19 19.5h4" stroke="#171e22" strokeWidth="1.5" />
  </svg>
);

const ModifiedMark = () => (
  <svg width={24} height={22} viewBox="0 0 24 22">
    <path d="M17 1H1v20h16" fill="none" stroke="#171e22" strokeWidth="1.6" />
    <path d="M17 5v12M12 8l10 6M22 8l-10 6" stroke="#9c1616" strokeWidth="2.4" />
  </svg>
);

const LayoutIcons = () => (
  <svg width={143} height={22} viewBox="0 0 143 22" fill="none" stroke="#171e22" strokeWidth="1.5">
    <path d="M19 1h11l4 5v15H19zM30 1v5h4" strokeWidth="2" />
    <path d="M48 1h11l4 4v16H48zM59 1v4h4M66 1h11l4 4v16H66zM77 1v4h4" />
    <path d="M96 3h15v18H96zM111 3h15v18h-15zM96 3l4-2h8l3 2M111 3l3-2h8l4 2" />
  </svg>
);

const ZoomSlider = () => (
  <svg width={278} height={24} viewBox="0 0 278 24">
    <rect x="7" y="10" width="18" height="5" fill="#171e22" />
    <rect x="24" y="10" width="233" height="4" fill="#d4dde1" />
    <rect x="99.5" y="3" width="1" height="18" fill="#d4dde1" />
    <ellipse cx="141" cy="12" rx="7" ry="8" fill="#fff" />
    <path d="M259 12.5h16M267 3v19" stroke="#171e22" strokeWidth="3" />
  </svg>
);

const CloseIcon = () => (
  <svg width={9} height={9} viewBox="0 0 9 9">
    <path d="M1 1l7 7M8 1L1 8" stroke="#c5ced3" strokeWidth="2.2" />
  </svg>
);

const App = () => (
  <>
    <GlobalStyle />
    <Window>
      <MenuBar>
        <MenuStrip>
          {menus.map(m => <MenuItem key={m}>{m}</MenuItem>)}
        </MenuStrip>
        <CloseCell><CloseIcon /></CloseCell>
      </MenuBar>
      <ToolRow $h={67}>
        <Grip />
        <Tools items={standardBar} />
      </ToolRow>
      <ToolRow $h={68}>
        <Grip />
        <Tools items={formatBar} />
      </ToolRow>
      <Body>
        <RulerRow>
          <TabCorner />
          <Ruler />
        </RulerRow>
        <Workspace>
          <Page>
            <MarginCorner />
            <MarginCorner $right />
            <DocLine $arabic>گل یخ</DocLine>
            <DocLine>Ice Flower</DocLine>
            <KeyDialog>
              <InputRow><InputCursor /></InputRow>
              {keys.map((k, i) => (
                <KeyRow key={k.key} $selected={i === 0}>
                  <KeyName>{k.key}</KeyName>
                  <KeyBar><BarMark /></KeyBar>
                  <KeyArabic>{k.arabic}</KeyArabic>
                  <KeyLatin $ml={k.ml}>{k.latin}</KeyLatin>
                </KeyRow>
              ))}
            </KeyDialog>
          </Page>
        </Workspace>
        <ScrollTrack>
          <ScrollThumb />
          <ResizeHandle />
        </ScrollTrack>
      </Body>
      <StatusBar>
        <StatusCell $w={353} $pl={16}>Page 1 of 1</StatusCell>
        <StatusCell $w={593} $pl={13}>3 words, 14 characters</StatusCell>
        <StatusCell $w={511} $pl={14}>Default Style</StatusCell>
        <StatusCell $w={446} $pl={18}>English (USA)</StatusCell>
        <StatusCell $w={52} $center><InsertMode /></StatusCell>
        <StatusCell $w={50} $center><ModifiedMark /></StatusCell>
        <StatusCell $w={50} />
        <StatusCell $w={246} />
        <StatusCell $w={143}><LayoutIcons /></StatusCell>
        <StatusCell $w={279}><ZoomSlider /></StatusCell>
        <StatusCell $w={82} $pl={11}>100%</StatusCell>
      </StatusBar>
    </Window>
  </>
);

export default App;
